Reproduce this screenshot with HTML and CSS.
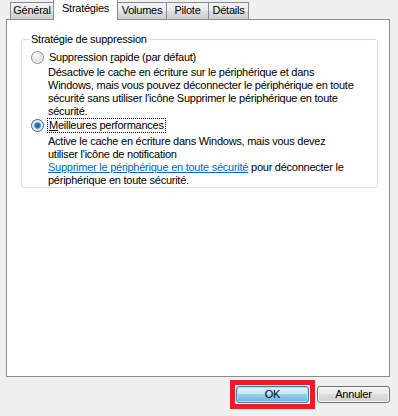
FILE: index.html
```html
<!DOCTYPE html>
<html lang="fr">
<head>
<meta charset="utf-8">
<link rel="stylesheet" href="styles.css">
</head>
<body>
<div class="dialog">
  <div class="tabs">
    <div class="tab t-general">Général</div>
    <div class="tab active t-strat">Stratégies</div>
    <div class="tab t-vol">Volumes</div>
    <div class="tab t-pil">Pilote</div>
    <div class="tab t-det">Détails</div>
  </div>
  <div class="panel">
    <fieldset class="group">
      <legend>Stratégie de suppression</legend>
      <div class="option">
        <span class="radio"></span>
        <span class="label">Suppression <u>r</u>apide (par défaut)</span>
      </div>
      <div class="desc">Désactive le cache en écriture sur le périphérique et dans<br>Windows, mais vous pouvez déconnecter le périphérique en toute<br>sécurité sans utiliser l'icône Supprimer le périphérique en toute<br>sécurité.</div>
      <div class="option opt2">
        <span class="radio checked"></span>
        <span class="label focus"><u>M</u>eilleures performances</span>
      </div>
      <div class="desc desc2">Active le cache en écriture dans Windows, mais vous devez<br>utiliser l'icône de notification<br><a class="link" href="#">Supprimer le périphérique en toute sécurité</a> pour déconnecter le<br>périphérique en toute sécurité.</div>
    </fieldset>
  </div>
  <div class="footer">
    <span class="highlight"><button class="btn default">OK</button></span>
    <button class="btn">Annuler</button>
  </div>
</div>
</body>
</html>
```
FILE: styles.css
```css
html, body {
  margin: 0;
  padding: 0;
  background: #f0f0f0;
}
body {
  font-family: "Liberation Sans", Arial, sans-serif;
  font-size: 11px;
  letter-spacing: -0.25px;
  color: #000;
  width: 398px;
  height: 416px;
  overflow: hidden;
}
.dialog {
  display: flex;
  flex-direction: column;
}
.tabs {
  display: flex;
  align-items: flex-end;
  height: 19px;
  padding-left: 10px;
  position: relative;
  z-index: 1;
}
.tab {
  height: 16px;
  line-height: 15px;
  border: 1px solid #898c95;
  border-bottom: none;
  border-left: none;
  background: linear-gradient(#f2f2f2, #ebebeb 50%, #dddddd 50%, #cfcfcf);
  box-sizing: content-box;
  text-align: center;
  white-space: nowrap;
}
.t-general { border-left: 1px solid #898c95; width: 42px; }
.tab.active {
  height: 20px;
  line-height: 17px;
  background: #fff;
  border-left: 1px solid #898c95;
  margin-left: -1px;
  margin-bottom: -1px;
  width: 63px;
}
.t-strat { width: 63px; }
.t-vol { width: 48px; }
.t-pil { width: 41px; }
.t-det { width: 39px; }

.panel {
  margin-left: 6px;
  width: 382px;
  height: 356px;
  border: 1px solid #898c95;
  background: #fff;
  padding: 0;
}
.group {
  margin: 13px 0 0 14px;
  width: 336px;
  border: 1px solid #d5dfe5;
  border-radius: 3px;
  padding: 0 10px 0 9px;
  min-inline-size: 0;
}
.group legend {
  padding: 0 1px;
  line-height: 13px;
  margin-left: -1px;
}
.option {
  display: flex;
  align-items: center;
  height: 14px;
  margin-top: 4px;
}
.opt2 { margin-top: 0; }
.radio {
  width: 11px;
  height: 11px;
  border-radius: 50%;
  border: 1px solid #8c8c8c;
  background: radial-gradient(circle at 40% 35%, #fdfdfd 0%, #e6e6e6 50%, #c9c9c9 100%);
  box-shadow: inset 0 0 0 1px #f4f4f4;
  flex: none;
  margin-right: 4px;
}
.radio.checked {
  border-color: #2c628b;
  background: radial-gradient(circle at 50% 50%, #1c5f9c 0%, #2a7bc2 30%, #62b0e8 42%, #e8edf2 48%, #dcdcdc 100%);
  box-shadow: inset 0 0 0 1px #f0f0f0;
}
.label {
  line-height: 13px;
  padding: 0 1px;
}
.label u { text-decoration: underline; }
.focus {
  outline: 1px dotted #000;
  outline-offset: 0;
}
.desc {
  margin-left: 17px;
  margin-top: 2px;
  line-height: 13px;
  white-space: nowrap;
}
.desc2 { margin-top: 3px; }
.link {
  color: #0066cc;
  text-decoration: underline;
}
.footer {
  display: flex;
  justify-content: flex-end;
  align-items: center;
  gap: 2px;
  padding: 3px 8px 0 0;
}
.highlight {
  display: flex;
  border: 5px solid #ed1c24;
  padding: 1px;
}
.btn {
  font-family: "Liberation Sans", Arial, sans-serif;
  font-size: 11px;
  letter-spacing: -0.2px;
  width: 73px;
  height: 17px;
  padding: 0;
  border: 1px solid #707070;
  border-radius: 3px;
  background: linear-gradient(#f2f2f2, #ebebeb 50%, #dddddd 50%, #cfcfcf);
  box-shadow: inset 0 0 0 1px #fcfcfc;
  color: #000;
  line-height: 13px;
}
.btn.default {
  border-color: #3c7fb1;
  background: linear-gradient(#e5f4fc, #c4e5f6 50%, #98d1ef 50%, #68b3db);
  box-shadow: inset 0 0 0 1px #a6e3fb;
}
```
